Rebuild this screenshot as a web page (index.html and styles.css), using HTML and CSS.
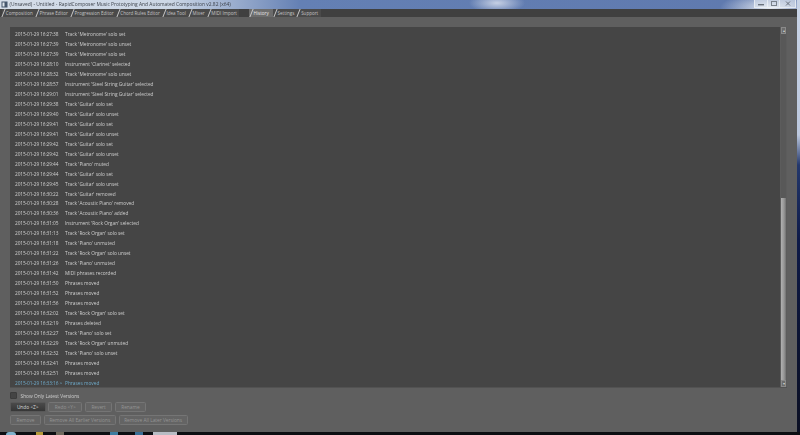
FILE: index.html
```html
<!DOCTYPE html>
<html lang="en">
<head>
<meta charset="utf-8">
<title>RapidComposer History</title>
<link rel="stylesheet" href="styles.css">
</head>
<body>
<div class="desktop">
  <div class="window">
    <header class="titlebar">
      <svg class="app-icon" width="7" height="7" viewBox="0 0 7 7"><rect x="0.5" y="0.5" width="6" height="6" fill="#45566c"/><rect x="1.5" y="1.5" width="2" height="4" fill="#dfe5ec"/></svg>
      <span class="title">(Unsaved) - Untitled - RapidComposer Music Prototyping And Automated Composition v2.82 (x64)</span>
      <div class="winbtns">
        <span class="winbtn min"><svg width="6" height="5" viewBox="0 0 6 5"><rect x="0" y="3" width="6" height="1.4" fill="#69717c"/></svg></span>
        <span class="winbtn max"><svg width="6" height="5" viewBox="0 0 6 5"><rect x="0.5" y="0.5" width="5" height="4" fill="none" stroke="#7a828c"/></svg></span>
        <span class="winbtn close"><svg width="6" height="5" viewBox="0 0 6 5"><path d="M1 0.5 5 4.5M5 0.5 1 4.5" stroke="#69717c"/></svg></span>
      </div>
    </header>
    <nav class="tabs">
      <span class="tab">Composition</span><span class="tab">Phrase Editor</span><span class="tab">Progression Editor</span><span class="tab">Chord Rules Editor</span><span class="tab">Idea Tool</span><span class="tab">Mixer</span><span class="tab">MIDI Import</span><span class="tab active">History</span><span class="tab">Settings</span><span class="tab">Support</span>
    </nav>
    <main class="panel">
      <section class="listbox">
        <ul class="log">
          <li><time>2015-01-29 16:27:38</time><span>Track 'Metronome' solo set</span></li>
          <li><time>2015-01-29 16:27:39</time><span>Track 'Metronome' solo unset</span></li>
          <li><time>2015-01-29 16:27:39</time><span>Track 'Metronome' solo set</span></li>
          <li><time>2015-01-29 16:28:10</time><span>Instrument 'Clarinet' selected</span></li>
          <li><time>2015-01-29 16:28:32</time><span>Track 'Metronome' solo unset</span></li>
          <li><time>2015-01-29 16:28:57</time><span>Instrument 'Steel String Guitar' selected</span></li>
          <li><time>2015-01-29 16:29:01</time><span>Instrument 'Steel String Guitar' selected</span></li>
          <li><time>2015-01-29 16:29:38</time><span>Track 'Guitar' solo set</span></li>
          <li><time>2015-01-29 16:29:40</time><span>Track 'Guitar' solo unset</span></li>
          <li><time>2015-01-29 16:29:41</time><span>Track 'Guitar' solo set</span></li>
          <li><time>2015-01-29 16:29:41</time><span>Track 'Guitar' solo unset</span></li>
          <li><time>2015-01-29 16:29:42</time><span>Track 'Guitar' solo set</span></li>
          <li><time>2015-01-29 16:29:42</time><span>Track 'Guitar' solo unset</span></li>
          <li><time>2015-01-29 16:29:44</time><span>Track 'Piano' muted</span></li>
          <li><time>2015-01-29 16:29:44</time><span>Track 'Guitar' solo set</span></li>
          <li><time>2015-01-29 16:29:45</time><span>Track 'Guitar' solo unset</span></li>
          <li><time>2015-01-29 16:30:22</time><span>Track 'Guitar' removed</span></li>
          <li><time>2015-01-29 16:30:28</time><span>Track 'Acoustic Piano' removed</span></li>
          <li><time>2015-01-29 16:30:36</time><span>Track 'Acoustic Piano' added</span></li>
          <li><time>2015-01-29 16:31:05</time><span>Instrument 'Rock Organ' selected</span></li>
          <li><time>2015-01-29 16:31:13</time><span>Track 'Rock Organ' solo set</span></li>
          <li><time>2015-01-29 16:31:18</time><span>Track 'Piano' unmuted</span></li>
          <li><time>2015-01-29 16:31:22</time><span>Track 'Rock Organ' solo unset</span></li>
          <li><time>2015-01-29 16:31:26</time><span>Track 'Piano' unmuted</span></li>
          <li><time>2015-01-29 16:31:42</time><span>MIDI phrases recorded</span></li>
          <li><time>2015-01-29 16:31:50</time><span>Phrases moved</span></li>
          <li><time>2015-01-29 16:31:52</time><span>Phrases moved</span></li>
          <li><time>2015-01-29 16:31:56</time><span>Phrases moved</span></li>
          <li><time>2015-01-29 16:32:02</time><span>Track 'Rock Organ' solo set</span></li>
          <li><time>2015-01-29 16:32:19</time><span>Phrases deleted</span></li>
          <li><time>2015-01-29 16:32:27</time><span>Track 'Piano' solo set</span></li>
          <li><time>2015-01-29 16:32:29</time><span>Track 'Rock Organ' unmuted</span></li>
          <li><time>2015-01-29 16:32:32</time><span>Track 'Piano' solo unset</span></li>
          <li><time>2015-01-29 16:32:41</time><span>Phrases moved</span></li>
          <li><time>2015-01-29 16:32:51</time><span>Phrases moved</span></li>
          <li class="current"><time>2015-01-29 16:33:16 &gt;</time><span>Phrases moved</span></li>
        </ul>
        <div class="scrollbar">
          <span class="arrow">▴</span>
          <div class="track"><div class="thumb"></div></div>
          <span class="arrow">▾</span>
        </div>
      </section>
      <label class="check"><span class="box"></span>Show Only Latest Versions</label>
      <div class="btnrow first">
        <button class="btn on w35">Undo &lt;Z&gt;</button><button class="btn w34">Redo &lt;Y&gt;</button><button class="btn w27">Revert</button><button class="btn w31">Rename</button>
      </div>
      <div class="btnrow">
        <button class="btn w31">Remove</button><button class="btn w72">Remove All Earlier Versions</button><button class="btn w69">Remove All Later Versions</button>
      </div>
    </main>
  </div>
  <footer class="taskbar">
    <span class="tb start"></span><span class="tb y"></span><span class="tb g"></span><span class="tb b"></span><span class="tb b2"></span><span class="tb active"></span>
  </footer>
</div>
</body>
</html>
```
FILE: styles.css
```css
* { box-sizing: border-box; }
html, body { margin: 0; height: 100%; overflow: hidden; }
body { font-family: "Open Sans", "Liberation Sans", sans-serif; }
.desktop {
  width: 800px; height: 435px; display: flex; flex-direction: column;
  background: linear-gradient(180deg, #c9d4e6 0, #bcc8de 135px, #24386c 165px, #0e1a48 240px, #0c1434 330px, #0c1024 432px);
}
.window { flex: 1; min-height: 0; margin-right: 3px; display: flex; flex-direction: column; }
.titlebar {
  height: 9px; flex: none; display: flex; align-items: center; padding-left: 1px; gap: 1.5px;
  background:
    radial-gradient(ellipse 28px 10px at 497px 3px, #c6d0e4 0, #c6d0e400 100%),
    radial-gradient(ellipse 50px 16px at 770px 8px, #e4e9f1 0, #e4e9f100 100%),
    linear-gradient(90deg, #d5dde8 0, #ccd7e6 170px, #8ea3c8 250px, #6480b4 300px, #5f79ae 100%);
}
.title { font-size: 4.9px; line-height: 9px; color: #3a3f48; white-space: nowrap; filter: blur(0.25px); }
.winbtns { margin-left: auto; display: flex; margin-right: 1px; height: 8px; align-self: flex-start; }
.winbtn { height: 8px; display: flex; align-items: center; justify-content: center; background: #e6ebf280; border-left: 1px solid #f2f5f8b0; border-bottom: 1px solid #f2f5f8a0; }
.winbtn.min { width: 13px; }
.winbtn.max { width: 12px; }
.winbtn.close { width: 17px; border-right: 1px solid #f2f5f8b0; }
.tabs { height: 8px; flex: none; background: #404040; display: flex; padding-left: 1.5px; }
.tab {
  font-size: 4.55px; line-height: 8px; height: 8px; color: #c4c4c4; padding: 0 2.4px 0 1.6px; white-space: nowrap;
  background: #4a4a4a; display: flex;
}
.tab::before {
  content: ""; width: 1px; height: 8px; margin-right: 1.7px; flex: none;
  background: #c8c8c8; transform: skewX(-22deg);
}
.tab.active { background: #6c6c6c; color: #e8e8e8; }
.panel { flex: 1; min-height: 0; background: #5f5f5f; padding: 10px 10px 0 10px; display: flex; flex-direction: column; }
.listbox { height: 361px; flex: none; background: #454545; display: flex; border-bottom: 1px solid #525252; }
.log { flex: 1; list-style: none; margin: 0; padding: 3px 0 0 5px; filter: blur(0.2px); }
.log li { height: 9.97px; line-height: 9.97px; font-size: 4.8px; color: #cfcfcf; display: flex; white-space: nowrap; }
.log time { width: 50px; flex: none; letter-spacing: -0.1px; }
.log .current { color: #6ea9c8; }
.scrollbar { width: 7px; flex: none; display: flex; flex-direction: column; background: #505050; border-left: 1px solid #5c5c5c; border-right: 1px solid #5c5c5c; }
.arrow { height: 7px; flex: none; background: #6c6c6c; border: 1px solid #8a8a8a; font-size: 4px; line-height: 5px; text-align: center; color: #d0d0d0; overflow: hidden; }
.track { flex: 1; display: flex; flex-direction: column; justify-content: flex-end; background: #585858; }
.thumb { height: 182px; background: linear-gradient(90deg, #b0b0b0, #969696 60%, #707070); }
.check { display: flex; align-items: center; height: 9px; margin-top: 3px; font-size: 4.8px; color: #d0d0d0; gap: 3.5px; filter: blur(0.2px); }
.box { width: 7px; height: 7px; background: #444; border: 1px solid #3c3c3c; border-radius: 1px; }
.btnrow { display: flex; gap: 2.8px; margin-top: 3px; height: 9.5px; }
.btnrow.first { margin-top: 2px; height: 10px; }
.btn {
  height: 100%; padding: 0; font: 4.8px/8px "Open Sans", "Liberation Sans", sans-serif; color: #959595;
  background: #646464; border: 1px solid #757575; border-radius: 1.5px; white-space: nowrap;
}
.btn.on { background: linear-gradient(180deg, #4a4a4a, #363636); color: #dcdcdc; border-color: #585858; }
.w27 { width: 27px; }
.w31 { width: 31px; }
.w34 { width: 34px; }
.w35 { width: 35.5px; }
.w69 { width: 69px; }
.w72 { width: 72px; }
.taskbar { height: 3px; flex: none; background: #0c0e12; display: flex; }
.tb { height: 3px; }
.start { width: 10px; margin-left: 6px; background: #7fb2cc; border-radius: 4px 4px 0 0; }
.y { width: 7px; margin-left: 20px; background: #b59a3a; }
.g { width: 8px; margin-left: 13px; background: #6f6a5e; }
.b { width: 8px; margin-left: 46px; background: #3e7ca0; }
.b2 { width: 8px; margin-left: 17px; background: #3a6f96; }
.active { width: 24px; margin-left: 10px; background: #b8bcc4; }
```
